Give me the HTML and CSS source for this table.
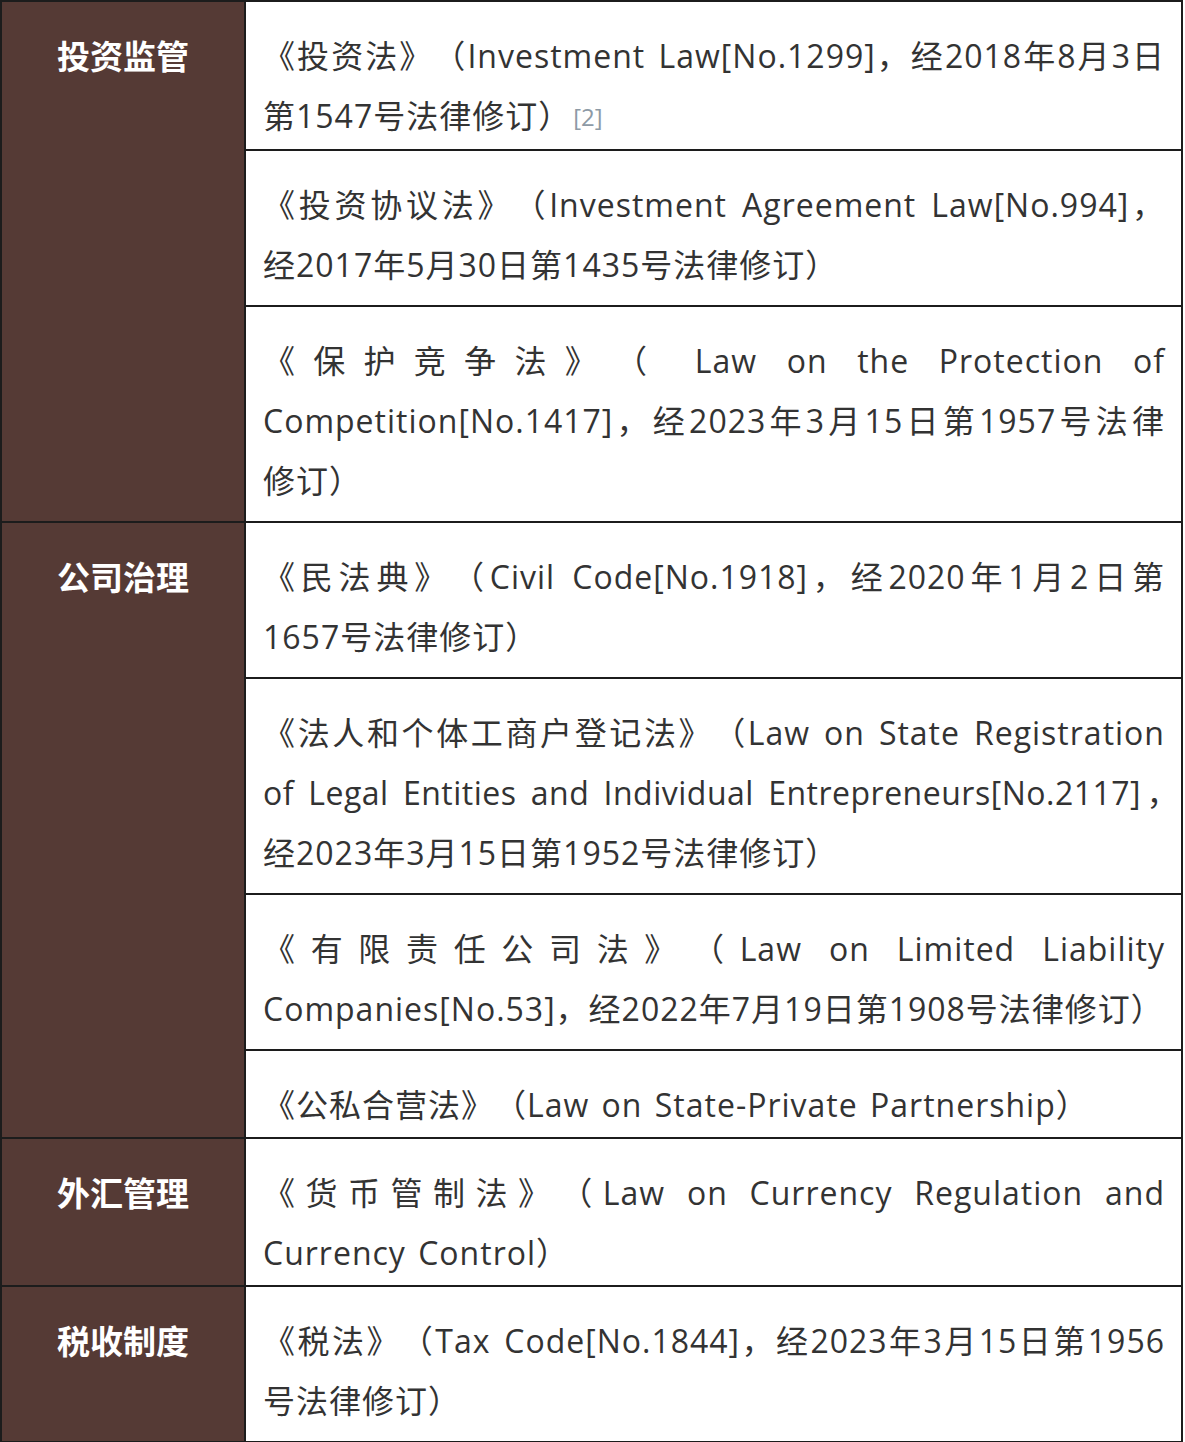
FILE: index.html
```html
<!DOCTYPE html>
<html lang="zh-CN">
<head>
<meta charset="utf-8">
<title>法律法规</title>
<link rel="stylesheet" href="styles.css">
</head>
<body>
<table class="law-table">
  <tr>
    <th class="cat" rowspan="3">投资监管</th>
    <td class="law tight">
      <span class="ln j">《投资法》（Investment Law[No.1299]，经2018年8月3日</span>
      <span class="ln">第1547号法律修订）<span class="ref">[2]</span></span>
    </td>
  </tr>
  <tr>
    <td class="law">
      <span class="ln j">《投资协议法》（Investment Agreement Law[No.994]，</span>
      <span class="ln">经2017年5月30日第1435号法律修订）</span>
    </td>
  </tr>
  <tr>
    <td class="law">
      <span class="ln j">《保护竞争法》（ Law on the Protection of</span>
      <span class="ln j">Competition[No.1417]，经2023年3月15日第1957号法律</span>
      <span class="ln">修订）</span>
    </td>
  </tr>
  <tr>
    <th class="cat" rowspan="4">公司治理</th>
    <td class="law">
      <span class="ln j">《民法典》（Civil Code[No.1918]，经2020年1月2日第</span>
      <span class="ln">1657号法律修订）</span>
    </td>
  </tr>
  <tr>
    <td class="law">
      <span class="ln j">《法人和个体工商户登记法》（Law on State Registration</span>
      <span class="ln j hang">of Legal Entities and Individual Entrepreneurs[No.2117]，</span>
      <span class="ln">经2023年3月15日第1952号法律修订）</span>
    </td>
  </tr>
  <tr>
    <td class="law">
      <span class="ln j">《有限责任公司法》（Law on Limited Liability</span>
      <span class="ln">Companies[No.53]，经2022年7月19日第1908号法律修订）</span>
    </td>
  </tr>
  <tr>
    <td class="law tight">
      <span class="ln">《公私合营法》（Law on State-Private Partnership）</span>
    </td>
  </tr>
  <tr>
    <th class="cat">外汇管理</th>
    <td class="law tight">
      <span class="ln j">《货币管制法》（Law on Currency Regulation and</span>
      <span class="ln">Currency Control）</span>
    </td>
  </tr>
  <tr>
    <th class="cat">税收制度</th>
    <td class="law">
      <span class="ln j">《税法》（Tax Code[No.1844]，经2023年3月15日第1956</span>
      <span class="ln">号法律修订）</span>
    </td>
  </tr>
</table>
</body>
</html>
```

FILE: styles.css
```css
html, body {
  margin: 0;
  padding: 0;
  background: #ffffff;
}

.law-table {
  width: 1183px;
  border-collapse: collapse;
  table-layout: fixed;
  font-family: "Open Sans", "Noto Sans CJK SC", sans-serif;
  color: #333333;
}

.law-table th,
.law-table td {
  border: 2px solid #1c1c1c;
  vertical-align: top;
}

.cat {
  width: 210px;
  background: #553a35;
  color: #ffffff;
  font-family: "Noto Sans CJK SC", sans-serif;
  font-weight: 700;
  font-size: 33px;
  line-height: 60px;
  text-align: center;
  padding: 23px 16px 0;
}

.law {
  font-size: 32px;
  line-height: 60px;
  letter-spacing: 1px;
  word-spacing: 3px;
  text-spacing-trim: space-all;
  padding: 24px 16px 10px 17px;
}

.law.tight {
  padding-bottom: 2px;
}

.ln {
  display: block;
  white-space: nowrap;
  text-align: left;
}

.ln.j {
  text-align: justify;
  text-align-last: justify;
}

.ln.hang {
  margin-right: -14px;
  letter-spacing: 0.5px;
  word-spacing: 0;
}

.ref {
  font-size: 24px;
  letter-spacing: 0;
  color: #8d9aa6;
  margin-left: 2px;
  vertical-align: 2px;
}
```
